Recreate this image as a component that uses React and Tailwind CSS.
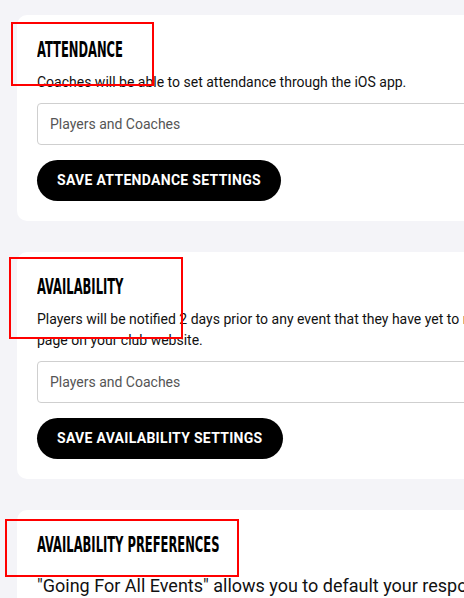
import React from 'react';

const Heading = ({ children }) => (
  <h2 className="origin-left scale-x-[0.61] whitespace-nowrap font-['DejaVu_Sans_Condensed','DejaVu_Sans',sans-serif] text-[21px] leading-[26px] font-bold uppercase text-black">
    {children}
  </h2>
);

const SelectBox = ({ value }) => (
  <div className="mt-[10px] flex h-[42px] items-center rounded-[4px] border border-[#cfcfcf] bg-white px-3 text-[14px] text-[#555]">
    {value}
  </div>
);

const SaveButton = ({ label }) => (
  <button
    type="button"
    className="mt-[15px] h-[41px] self-start rounded-full bg-black px-5 text-[14px] font-bold uppercase tracking-[0.3px] text-white"
  >
    {label}
  </button>
);

const Card = ({ children }) => (
  <div className="flex w-[720px] flex-col rounded-[10px] bg-white px-5 pb-5 pt-[22px]">{children}</div>
);

const Marker = ({ className }) => (
  <div className={`pointer-events-none absolute border-2 border-[#ff0000] ${className}`} />
);

export default function App() {
  return (
    <div className="relative h-[598px] w-full overflow-hidden bg-[#f4f4f8] font-['Roboto',sans-serif]">
      <div className="flex flex-col gap-[31px] pl-[17px] pt-[15px]">
        <Card>
          <Heading>Attendance</Heading>
          <p className="mt-[9px] text-[14px] leading-[21px] text-[#111]">
            Coaches will be able to set attendance through the iOS app.
          </p>
          <SelectBox value="Players and Coaches" />
          <SaveButton label="Save Attendance Settings" />
        </Card>

        <Card>
          <Heading>Availability</Heading>
          <p className="mt-[9px] text-[14px] leading-[21px] text-[#111]">
            Players will be notified 2 days prior to any event that they have yet to respond to on the events
            <br />
            page on your club website.
          </p>
          <SelectBox value="Players and Coaches" />
          <SaveButton label="Save Availability Settings" />
        </Card>

        <Card>
          <Heading>Availability Preferences</Heading>
          <p className="mt-[15px] text-[18px] leading-[26px] text-[#111]">
            "Going For All Events" allows you to default your response for all events.
          </p>
        </Card>
      </div>

      <Marker className="left-[11px] top-[22px] h-[64px] w-[143px]" />
      <Marker className="left-[9px] top-[257px] h-[82px] w-[174px]" />
      <Marker className="left-[5px] top-[519px] h-[58px] w-[234px]" />
    </div>
  );
}
